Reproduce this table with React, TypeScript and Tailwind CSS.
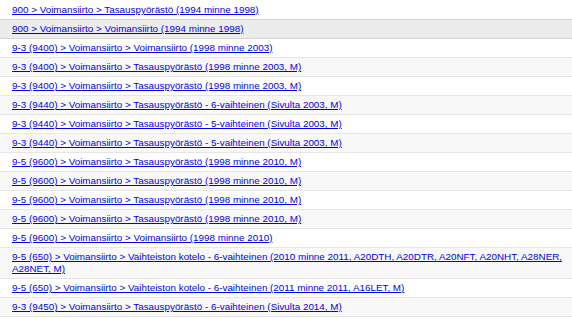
const rows = [
  '900 > Voimansiirto > Tasauspyörästö (1994 minne 1998)',
  '900 > Voimansiirto > Voimansiirto (1994 minne 1998)',
  '9-3 (9400) > Voimansiirto > Voimansiirto (1998 minne 2003)',
  '9-3 (9400) > Voimansiirto > Tasauspyörästö (1998 minne 2003, M)',
  '9-3 (9400) > Voimansiirto > Tasauspyörästö (1998 minne 2003, M)',
  '9-3 (9440) > Voimansiirto > Tasauspyörästö - 6-vaihteinen (Sivulta 2003, M)',
  '9-3 (9440) > Voimansiirto > Tasauspyörästö - 5-vaihteinen (Sivulta 2003, M)',
  '9-3 (9440) > Voimansiirto > Tasauspyörästö - 5-vaihteinen (Sivulta 2003, M)',
  '9-5 (9600) > Voimansiirto > Tasauspyörästö (1998 minne 2010, M)',
  '9-5 (9600) > Voimansiirto > Tasauspyörästö (1998 minne 2010, M)',
  '9-5 (9600) > Voimansiirto > Tasauspyörästö (1998 minne 2010, M)',
  '9-5 (9600) > Voimansiirto > Tasauspyörästö (1998 minne 2010, M)',
  '9-5 (9600) > Voimansiirto > Voimansiirto (1998 minne 2010)',
  '9-5 (650) > Voimansiirto > Vaihteiston kotelo - 6-vaihteinen (2010 minne 2011, A20DTH, A20DTR, A20NFT, A20NHT, A28NER, A28NET, M)',
  '9-5 (650) > Voimansiirto > Vaihteiston kotelo - 6-vaihteinen (2011 minne 2011, A16LET, M)',
  '9-3 (9450) > Voimansiirto > Tasauspyörästö - 6-vaihteinen (Sivulta 2014, M)',
];

// row 2 is shown in its hover state
const HOVER = 1;

export default function App() {
  return (
    <div className="w-[572px] h-[319px] overflow-hidden bg-white font-['Liberation_Sans',Arial,sans-serif] text-[9.85px] leading-[12px]">
      <ul className="border-b border-[#e6e6e6]">
        {rows.map((r, i) => {
          const bg = i === HOVER ? 'bg-[#ececec]' : i % 2 === 1 ? 'bg-[#f8f8f8]' : 'bg-white';
          const line =
            i === HOVER || i === HOVER + 1
              ? 'border-[#d6d6d6]'
              : i === 0
                ? 'border-white'
                : 'border-[#e6e6e6]';
          return (
            <li key={i} className={`border-t ${line} ${bg} pl-3 pr-1 py-[3px]`}>
              <a href="#" className="text-[#0000f0] underline">
                {r}
              </a>
            </li>
          );
        })}
      </ul>
    </div>
  );
}
